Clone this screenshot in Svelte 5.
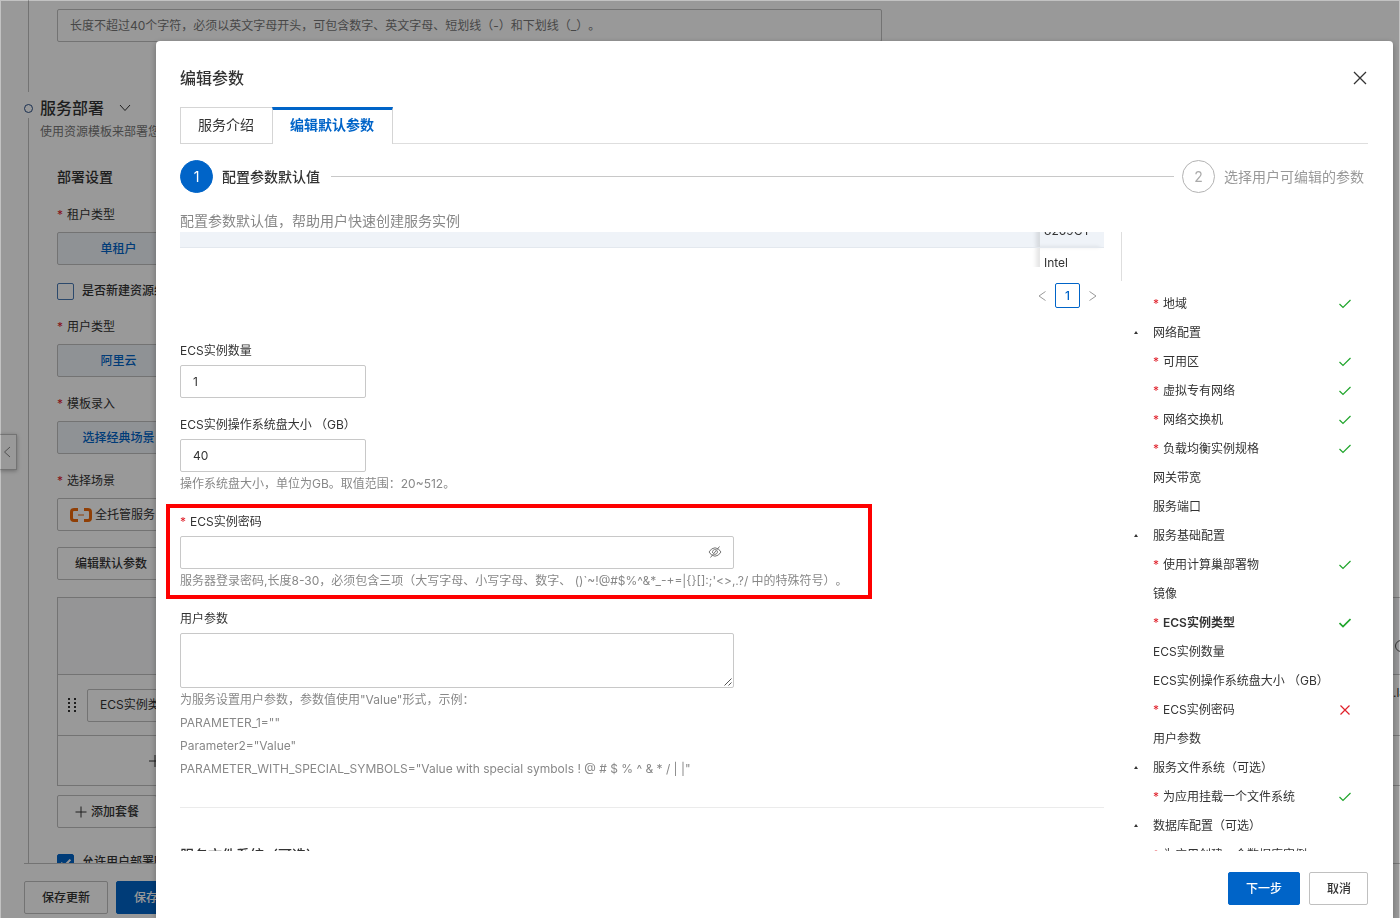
<script>
  let tenant = $state('单租户');
  let showPassword = $state(false);
  let count = $state('1');
  let diskSize = $state('40');
  let password = $state('');
  let userData = $state('');
  let activeTab = $state(1);

  const tabs = ['服务介绍', '编辑默认参数'];

  const navItems = [
    { label: '地域', required: true, status: 'ok' },
    { label: '网络配置', group: true },
    { label: '可用区', required: true, status: 'ok' },
    { label: '虚拟专有网络', required: true, status: 'ok' },
    { label: '网络交换机', required: true, status: 'ok' },
    { label: '负载均衡实例规格', required: true, status: 'ok' },
    { label: '网关带宽' },
    { label: '服务端口' },
    { label: '服务基础配置', group: true },
    { label: '使用计算巢部署物', required: true, status: 'ok' },
    { label: '镜像' },
    { label: 'ECS实例类型', required: true, status: 'ok', active: true },
    { label: 'ECS实例数量' },
    { label: 'ECS实例操作系统盘大小 （GB）' },
    { label: 'ECS实例密码', required: true, status: 'error' },
    { label: '用户参数' },
    { label: '服务文件系统（可选）', group: true },
    { label: '为应用挂载一个文件系统', required: true, status: 'ok' },
    { label: '数据库配置（可选）', group: true },
    { label: '为应用创建一个数据库实例', required: true }
  ];

  const passwordHelp =
    "服务器登录密码,长度8-30，必须包含三项（大写字母、小写字母、数字、 ()`~!@#$%^&*_-+=|{}[]:;'<>,.?/ 中的特殊符号）。";
</script>

<div class="page">
  <div class="content">
    <section class="step-prev">
      <input
        class="name-input"
        aria-label="名称"
        placeholder="长度不超过40个字符，必须以英文字母开头，可包含数字、英文字母、短划线（-）和下划线（_）。"
      />
    </section>

    <div class="step-head">
      <span class="step-dot"></span>
      <h2>服务部署</h2>
      <svg class="step-arrow" viewBox="0 0 12 8" width="12" height="8"><path d="M1 1l5 5.5L11 1" /></svg>
    </div>

    <section class="step-body">
      <p class="step-desc">使用资源模板来部署您的服务</p>
      <div class="settings">
        <h3>部署设置</h3>

        <p class="label"><i>*</i>租户类型</p>
        <button class="segment" onclick={() => (tenant = '单租户')}>{tenant}</button>

        <label class="check-row first"><input type="checkbox" />是否新建资源组</label>

        <p class="label"><i>*</i>用户类型</p>
        <button class="segment">阿里云</button>

        <p class="label"><i>*</i>模板录入</p>
        <button class="segment">选择经典场景</button>

        <p class="label"><i>*</i>选择场景</p>
        <button class="scene">
          <svg viewBox="0 0 22 14" width="22" height="14">
            <path d="M8 1.5H4Q1.5 1.5 1.5 4v6Q1.5 12.5 4 12.5H8M14 1.5h4Q20.5 1.5 20.5 4v6Q20.5 12.5 18 12.5H14" />
            <path class="thin" d="M8 7h6" />
          </svg>
          全托管服务
        </button>

        <button class="plain edit">编辑默认参数</button>

        <div class="packages">
          <div class="pkg-row head"><span class="help-circle"></span></div>
          <div class="pkg-row item">
            <svg class="grip" viewBox="0 0 10 14" width="10" height="14">
              {#each [1, 5, 9, 13] as y}
                <path d="M1 {y - 1}h2v2h-2zM7 {y - 1}h2v2h-2z" />
              {/each}
            </svg>
            <button class="pkg-select">ECS实例类型</button>
            <span class="pkg-value">.large</span>
          </div>
          <div class="pkg-row add">
            <svg viewBox="0 0 12 12" width="12" height="12"><path d="M6 0v12M0 6h12" /></svg>
          </div>
        </div>

        <button class="plain add-package">
          <svg viewBox="0 0 12 12" width="12" height="12"><path d="M6 0.5v11M0.5 6h11" /></svg>
          添加套餐
        </button>

        <label class="check-row last"><input type="checkbox" checked />允许用户部署时选择</label>
      </div>
    </section>
  </div>

  <footer class="page-footer">
    <button class="btn">保存更新</button>
    <button class="btn primary">保存并提交</button>
  </footer>

  <button class="collapse" aria-label="展开">
    <svg viewBox="0 0 8 12" width="8" height="12"><path d="M7 1L1.5 6L7 11" /></svg>
  </button>
</div>

<div class="overlay">
  <div class="modal" role="dialog" aria-modal="true" aria-labelledby="modal-title">
    <header class="modal-header">
      <h1 id="modal-title">编辑参数</h1>
      <button class="close" aria-label="关闭">
        <svg viewBox="0 0 14 14" width="14" height="14"><path d="M1 1l12 12M13 1L1 13" /></svg>
      </button>
    </header>

    <div class="tabs" role="tablist">
      {#each tabs as tab, i}
        <button
          class="tab"
          class:active={activeTab === i}
          role="tab"
          aria-selected={activeTab === i}
          onclick={() => (activeTab = i)}>{tab}</button>
      {/each}
      <span class="tabs-line"></span>
    </div>

    <div class="steps">
      <span class="step-num current">1</span>
      <span class="step-title current">配置参数默认值</span>
      <span class="steps-line"></span>
      <span class="step-num">2</span>
      <span class="step-title">选择用户可编辑的参数</span>
    </div>

    <p class="modal-desc">配置参数默认值，帮助用户快速创建服务实例</p>

    <div class="modal-body">
      <div class="form">
        <div class="table-wrap">
          <table>
            <tbody>
              <tr class="selected"><td></td><td class="fixed">8269CY</td></tr>
              <tr><td></td><td class="fixed">Intel</td></tr>
            </tbody>
          </table>
        </div>

        <div class="pagination">
          <button aria-label="上一页">
            <svg viewBox="0 0 8 12" width="8" height="12"><path d="M7.5 1.5L1 6l6.5 4.5" /></svg>
          </button>
          <button class="page-num">1</button>
          <button aria-label="下一页">
            <svg viewBox="0 0 8 12" width="8" height="12"><path d="M0.5 1.5L7 6L0.5 10.5" /></svg>
          </button>
        </div>

        <div class="field">
          <label for="count">ECS实例数量</label>
          <input id="count" class="short" bind:value={count} />
        </div>

        <div class="field">
          <label for="disk">ECS实例操作系统盘大小 （GB）</label>
          <input id="disk" class="short" bind:value={diskSize} />
          <p class="help">操作系统盘大小，单位为GB。取值范围：20~512。</p>
        </div>

        <div class="field marked">
          <label for="password"><i>*</i>ECS实例密码</label>
          <div class="password">
            <input id="password" type={showPassword ? 'text' : 'password'} bind:value={password} />
            <button aria-label="显示密码" onclick={() => (showPassword = !showPassword)}>
              <svg viewBox="0 0 14 12" width="14" height="12">
                <path d="M1 6Q3.5 1.8 7 1.8T13 6Q10.5 10.2 7 10.2T1 6zM11.5 0.5L2.5 11.5" />
                <path d="M9 4.5a2.5 2.5 0 0 1-3.8 3.2M4.7 7a2.5 2.5 0 0 1 3.2-3.3" />
              </svg>
            </button>
          </div>
          <p class="help">{passwordHelp}</p>
        </div>

        <div class="field">
          <label for="user-data">用户参数</label>
          <div class="textarea">
            <textarea id="user-data" bind:value={userData}></textarea>
            <svg viewBox="0 0 8 8" width="8" height="8"><path d="M0.5 7.5l7-7M4.5 7.5l3-3" /></svg>
          </div>
          <p class="help">
            为服务设置用户参数，参数值使用"Value"形式，示例：<br />
            PARAMETER_1=""<br />
            Parameter2="Value"<br />
            PARAMETER_WITH_SPECIAL_SYMBOLS="Value with special symbols ! @ # $ % ^ & * / | |"
          </p>
        </div>

        <h4 class="group-title">服务文件系统（可选）</h4>
      </div>

      <nav class="side">
        <div class="side-rule"></div>
        <ul>
          {#each navItems as item}
            <li class:active={item.active}>
              <span class="caret">
                {#if item.group}
                  <svg viewBox="0 0 4 3" width="4" height="3"><path d="M2 0L4 3H0z" /></svg>
                {/if}
              </span>
              {#if item.required}<i>*</i>{/if}
              <span class="side-label">{item.label}</span>
              {#if item.status === 'ok'}
                <svg class="ok" viewBox="0 0 12 10" width="12" height="10"><path d="M0.5 5L4 8.5L11.5 1" /></svg>
              {:else if item.status === 'error'}
                <svg class="error" viewBox="0 0 12 10" width="12" height="10"><path d="M1.5 0.5l9 9M10.5 0.5l-9 9" /></svg>
              {/if}
            </li>
          {/each}
        </ul>
      </nav>
    </div>

    <footer class="modal-footer">
      <button class="btn primary next">下一步</button>
      <button class="btn cancel">取消</button>
    </footer>
  </div>
</div>

<style>
  :global(body) {
    background: #fff;
    overflow: hidden;
  }

  .page,
  .overlay {
    font-family: Inter, "Noto Sans CJK SC", sans-serif;
    font-size: 12px;
    line-height: 20px;
    color: #333;
    text-spacing-trim: space-all;
  }

  .page *,
  .overlay,
  .overlay *,
  .marked::after {
    box-sizing: border-box;
  }

  h1, h2, h3, h4, p, ul {
    margin: 0;
    padding: 0;
  }

  button,
  input,
  textarea {
    font: inherit;
    color: inherit;
  }

  button {
    padding: 0;
    border: 0;
    background: none;
    cursor: pointer;
    white-space: nowrap;
  }

  svg {
    display: block;
    flex: none;
    fill: none;
    stroke: currentColor;
  }

  i {
    font-style: normal;
    color: #e0202a;
    width: 10px;
    flex: none;
    display: inline-block;
  }

  /* page behind the dialog */
  .page {
    height: 100vh;
    display: flex;
    flex-direction: column;
    overflow: hidden;
    position: relative;
  }

  .content {
    flex: 1;
    min-height: 0;
    overflow: hidden;
  }

  .step-prev {
    height: 92px;
    margin-left: 28px;
    padding: 9px 0 0 28px;
    border-left: 1px solid #c0c0c0;
  }

  .name-input {
    display: block;
    width: 825px;
    height: 33px;
    padding: 0 12px;
    border: 1px solid #c0c0c0;
    border-radius: 2px;
  }

  .name-input::placeholder {
    color: #777;
    opacity: 1;
  }

  .step-head {
    height: 26px;
    padding: 6px 0 0 24px;
    display: flex;
    align-items: center;
  }

  .step-dot {
    width: 9px;
    height: 9px;
    border: 1px solid #2a4f86;
    border-radius: 50%;
    margin-right: 7px;
  }

  .step-head h2 {
    font-size: 16px;
    font-weight: 500;
    line-height: 20px;
  }

  .step-arrow {
    margin-left: 15px;
  }

  .step-body {
    margin-left: 28px;
    padding: 4px 0 40px 11px;
    border-left: 1px solid #c0c0c0;
  }

  .step-desc {
    color: #777;
  }

  .settings {
    padding-left: 17px;
  }

  .settings h3 {
    margin: 25px 0 18px;
    font-size: 14px;
    font-weight: 500;
    line-height: 20px;
  }

  .label {
    margin-bottom: 7px;
  }

  .segment,
  .scene,
  .plain,
  .pkg-select {
    display: flex;
    align-items: center;
    height: 33px;
    margin-bottom: 17px;
    border: 1px solid #c0c0c0;
    border-radius: 2px;
  }

  .segment {
    width: 123px;
    justify-content: center;
    background: #eff3f8;
    color: #0064c8;
    font-weight: 500;
  }

  .scene {
    width: 200px;
    margin-bottom: 16px;
    padding-left: 12px;
    gap: 3px;
  }

  .scene svg {
    stroke: #f06a0a;
    stroke-width: 3;
  }

  .scene .thin {
    stroke-width: 1;
  }

  .plain {
    padding: 0 17px;
    gap: 4px;
    font-weight: 500;
  }

  .check-row {
    display: flex;
    align-items: center;
    gap: 8px;
    font-weight: 500;
  }

  .check-row.first {
    margin: -1px 0 16px;
  }

  .check-row input {
    appearance: none;
    width: 17px;
    height: 17px;
    margin: 0;
    border: 1px solid #4a7ab5;
    border-radius: 2px;
  }

  .check-row input:checked {
    background: #0064c8 url('data:image/svg+xml,<svg xmlns="http://www.w3.org/2000/svg" viewBox="0 0 16 16"><path d="M3.5 8l3 3.2L12.5 5" fill="none" stroke="white" stroke-width="2"/></svg>') center / 16px no-repeat;
    border-color: #0064c8;
  }

  .packages {
    border: 1px solid #c0c0c0;
    border-right: 0;
    margin-bottom: 9px;
  }

  .pkg-row {
    display: flex;
    align-items: center;
    padding-left: 9px;
    border-bottom: 1px solid #c0c0c0;
  }

  .pkg-row.head {
    height: 77px;
    background: #f8f9fb;
    justify-content: flex-end;
    padding-top: 20px;
  }

  .pkg-row.item {
    height: 61px;
  }

  .pkg-row.add {
    height: 49px;
    padding-left: 91px;
    border-bottom: 0;
  }

  .help-circle {
    width: 12px;
    height: 12px;
    margin-right: -7px;
    border: 1px solid #555;
    border-radius: 50%;
  }

  .grip {
    fill: #333;
    stroke: none;
  }

  .pkg-select {
    width: 200px;
    margin: 0 0 0 10px;
    padding: 0 12px;
  }

  .pkg-value {
    width: 7px;
    margin: -24px 0 0 auto;
    overflow: hidden;
  }

  .add-package {
    margin-bottom: 24px;
  }

  .page-footer {
    margin-left: 24px;
    padding: 17px 0 4px;
    border-top: 1px solid #c0c0c0;
    display: flex;
    gap: 8px;
  }

  .btn {
    height: 33px;
    padding: 0 17px;
    border: 1px solid #c0c0c0;
    border-radius: 2px;
    background: #fff;
    font-weight: 500;
  }

  .btn.primary {
    background: #0064c8;
    border-color: #0064c8;
    color: #fff;
  }

  .collapse {
    position: absolute;
    left: 0;
    top: 434px;
    width: 17px;
    height: 36px;
    padding-left: 3px;
    border: 1px solid #c0c0c0;
    border-left: 0;
    background: #fff;
    box-shadow: 0 1px 4px rgba(0, 0, 0, 0.3);
    color: #888;
  }

  /* dialog */
  .overlay {
    position: fixed;
    inset: 0;
    display: flex;
    padding: 40px 6px 0 155px;
    border: 1px solid rgba(0, 0, 0, 0.24);
    border-bottom: 0;
    background: rgba(0, 0, 0, 0.4);
    background-clip: padding-box;
  }

  .modal {
    flex: 1;
    min-width: 0;
    display: flex;
    flex-direction: column;
    padding: 25px 25px 0 24px;
    border-radius: 4px 4px 0 0;
    background: #fff;
    box-shadow: 0 2px 6px rgba(0, 0, 0, 0.3);
  }

  .modal-header {
    display: flex;
    align-items: center;
    justify-content: space-between;
    height: 24px;
  }

  .modal-header h1 {
    font-size: 16px;
    font-weight: 500;
    line-height: 24px;
  }

  .close {
    padding: 1px;
  }

  .close svg {
    stroke-width: 1.3;
  }

  .tabs {
    display: flex;
    height: 37px;
    margin-top: 17px;
  }

  .tab {
    padding: 0 18px 1px 17px;
    border: 1px solid #d5d5d5;
    border-right: 0;
    font-size: 14px;
  }

  .tab.active {
    padding: 0 18px 4px 17px;
    border-top: 3px solid #0064c8;
    border-right: 1px solid #d5d5d5;
    border-bottom: 0;
    color: #0064c8;
    font-weight: 600;
  }

  .tabs-line {
    flex: 1;
    border-bottom: 1px solid #dedede;
  }

  .steps {
    display: flex;
    align-items: center;
    margin-top: 16px;
    font-size: 14px;
  }

  .step-num {
    flex: none;
    display: flex;
    align-items: center;
    justify-content: center;
    width: 33px;
    height: 33px;
    border: 1px solid #b3b3b3;
    border-radius: 50%;
    color: #aaa;
  }

  .step-num.current {
    background: #0064c8;
    border-color: #0064c8;
    color: #fff;
  }

  .step-title {
    min-width: 144px;
    margin-left: 9px;
    color: #999;
  }

  .step-title.current {
    min-width: 101px;
    color: #333;
    font-weight: 500;
  }

  .steps-line {
    flex: 1;
    height: 1px;
    margin: 0 8px;
    background: #c8c8c8;
  }

  .modal-desc {
    margin-top: 17px;
    font-size: 14px;
    line-height: 22px;
    color: #888;
  }

  .modal-body {
    flex: 1;
    min-height: 0;
    display: flex;
    gap: 17px;
    margin-left: -24px;
    padding-left: 24px;
    overflow: hidden;
  }

  .form {
    flex: 1;
    min-width: 0;
  }

  .table-wrap {
    height: 52px;
    margin-top: -17px;
    overflow: hidden;
  }

  table {
    width: 100%;
    border-collapse: collapse;
    table-layout: fixed;
  }

  td {
    height: 32px;
    padding: 0;
  }

  .selected td {
    background: #eff3f8;
    border-bottom: 1px solid #e3e8ee;
  }

  .fixed {
    width: 64px;
    padding-left: 4px;
    box-shadow: -4px 0 4px rgba(0, 0, 0, 0.1);
  }

  .pagination {
    display: flex;
    align-items: center;
    justify-content: flex-end;
    gap: 9px;
    margin: 16px 7px 33px 0;
    color: #999;
  }

  .pagination .page-num {
    width: 25px;
    height: 25px;
    border: 1px solid #0064c8;
    border-radius: 2px;
    color: #0064c8;
    font-weight: 500;
  }

  .field {
    position: relative;
    margin-bottom: 17px;
  }

  .field label {
    display: block;
    margin-bottom: 4px;
  }

  .field input {
    display: block;
    width: 100%;
    height: 33px;
    padding: 0 12px;
    border: 1px solid #c8c8c8;
    border-radius: 2px;
    background: #fff;
  }

  .field input.short {
    width: 186px;
  }

  .help {
    line-height: 23px;
    color: #888;
    white-space: nowrap;
  }

  .password,
  .textarea {
    position: relative;
    width: 554px;
  }

  .password button {
    position: absolute;
    right: 12px;
    top: 10px;
    color: #777;
  }

  .textarea textarea {
    display: block;
    width: 100%;
    height: 55px;
    padding: 6px 12px;
    border: 1px solid #c8c8c8;
    border-radius: 2px;
    resize: none;
  }

  .textarea svg {
    position: absolute;
    right: 2px;
    bottom: 2px;
    color: #555;
  }

  /* red frame around the password field */
  .marked::after {
    content: '';
    position: absolute;
    inset: -8px auto -7px -14px;
    width: 706px;
    border: 4px solid #fe0000;
    pointer-events: none;
  }

  .group-title {
    margin-top: 27px;
    padding-top: 37px;
    border-top: 1px solid #ebebeb;
    font-size: 14px;
    font-weight: 500;
    line-height: 20px;
  }

  .side {
    width: 247px;
    flex: none;
  }

  .side-rule {
    height: 49px;
    margin-bottom: 8px;
    border-left: 1px solid #dedede;
  }

  .side ul {
    list-style: none;
  }

  .side li {
    display: flex;
    align-items: center;
    height: 29px;
    padding: 0 17px 0 13px;
  }

  .side li.active {
    font-weight: 600;
  }

  .side li.active i {
    font-weight: 400;
  }

  .caret {
    width: 19px;
  }

  .caret svg {
    fill: #333;
    stroke: none;
  }

  .side-label {
    flex: 1;
    white-space: nowrap;
  }

  .ok {
    stroke: #1fa52b;
    stroke-width: 1.2;
  }

  .active .ok {
    stroke-width: 1.7;
  }

  .error {
    stroke: #e0202a;
    stroke-width: 1.2;
  }

  .modal-footer {
    display: flex;
    justify-content: flex-end;
    gap: 9px;
    padding: 21px 0 13px;
  }

  .next {
    width: 72px;
  }

  .cancel {
    width: 59px;
  }
</style>
